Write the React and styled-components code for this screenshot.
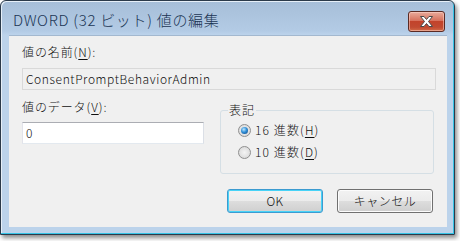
import React from "react";
import styled, { createGlobalStyle } from "styled-components";

const GlobalStyle = createGlobalStyle`
	html, body {
		margin: 0;
		padding: 0;
		background: #ffffff;
	}
	body {
		font-family: "Noto Sans CJK JP", "DejaVu Sans", sans-serif;
	}
`;

const Page = styled.div`
	width: 460px;
	height: 241px;
	overflow: hidden;
`;

const Window = styled.div`
	width: 455px;
	height: 235px;
	box-sizing: border-box;
	border: 1px solid #2b3a4a;
	border-radius: 6px 6px 0 0;
	background: linear-gradient(#a6bed8 0px, #b3cbe5 30px, #bcd3eb 34px, #bcd3eb 100%);
	box-shadow: inset -1px -1px 0 #35c4e6, inset 1px 1px 0 #e6eff8, 2px 3px 4px rgba(0, 0, 0, 0.45);
	display: flex;
	flex-direction: column;
	padding: 0 7px 7px 8px;
`;

const TitleBar = styled.div`
	height: 34px;
	display: flex;
	justify-content: space-between;
	align-items: flex-start;
`;

const Title = styled.div`
	padding: 9px 0 0 4px;
	font-size: 15px;
	line-height: 20px;
	font-weight: 300;
	color: #1b3554;
	letter-spacing: 0.7px;
`;

const CloseButton = styled.div`
	margin-top: 10px;
	margin-right: 2px;
	width: 37px;
	height: 21px;
	box-sizing: border-box;
	border: 1px solid #5b2a23;
	border-radius: 3px;
	background: linear-gradient(#e9ab9c 0%, #d7725d 45%, #c2432b 50%, #c14a31 80%, #d36c48 100%);
	box-shadow: inset 0 0 0 1px rgba(255, 220, 210, 0.5);
	display: flex;
	align-items: center;
	justify-content: center;
`;

const Client = styled.div`
	flex: 1;
	background: #f0f0f0;
	border-top: 1px solid #a3b8cf;
	padding: 8px 11px 0 13px;
	font-size: 12px;
	line-height: 16px;
	font-weight: 300;
	letter-spacing: 0.9px;
	color: #101010;
	display: flex;
	flex-direction: column;
`;

const Label = styled.div`
	margin-top: ${(p) => p.$top || 0}px;
`;

const Key = styled.span`
	text-decoration: underline;
	text-underline-offset: 2px;
`;

const ReadonlyField = styled.div`
	margin-top: 8px;
	height: 22px;
	box-sizing: border-box;
	border: 1px solid #d9d9d9;
	background: #f0f0f0;
	padding: 2px 3px;
	letter-spacing: 0.6px;
`;

const Row = styled.div`
	display: flex;
	gap: 16px;
	margin-top: 9px;
`;

const Column = styled.div`
	width: 182px;
	display: flex;
	flex-direction: column;
`;

const Input = styled.div`
	margin-top: 7px;
	height: 22px;
	box-sizing: border-box;
	border: 1px solid #abadb3;
	border-color: #abadb3 #dbdfe6 #e3e9ef #e2e3ea;
	background: #ffffff;
	padding: 2px 3px;
`;

const Group = styled.fieldset`
	margin: 4px 0 0 0;
	width: 214px;
	height: 71px;
	box-sizing: border-box;
	border: 1px solid #d5dfe5;
	border-radius: 3px;
	padding: 5px 0 0 17px;
	display: flex;
	flex-direction: column;
	gap: 6px;
`;

const Legend = styled.legend`
	padding: 0 1px;
	margin-left: -10px;
	line-height: 14px;
`;

const Radio = styled.div`
	display: flex;
	align-items: center;
	gap: 4px;
	height: 16px;
	letter-spacing: 1.1px;
`;

const Dot = styled.span`
	flex: none;
	width: 13px;
	height: 13px;
	box-sizing: border-box;
	border-radius: 50%;
	border: 1px solid #8f8f8f;
	background: radial-gradient(circle at 50% 50%, #f4f4f4 0, #dadada 80%);
	display: flex;
	align-items: center;
	justify-content: center;
	&::after {
		content: "";
		width: 7px;
		height: 7px;
		border-radius: 50%;
		display: ${(p) => (p.$on ? "block" : "none")};
		background: radial-gradient(circle at 40% 35%, #bfe8ff 0, #2f8fd8 45%, #0e3f7a 100%);
	}
`;

const Buttons = styled.div`
	display: flex;
	justify-content: flex-end;
	gap: 14px;
	margin-top: 15px;
	padding-right: 3px;
`;

const Button = styled.div`
	width: 96px;
	height: 24px;
	box-sizing: border-box;
	border: 1px solid ${(p) => (p.$primary ? "#3c9bd0" : "#707070")};
	border-radius: 3px;
	background: linear-gradient(#f2f2f2 0%, #ebebeb 50%, #dddddd 51%, #cfcfcf 100%);
	box-shadow: inset 0 0 0 1px ${(p) => (p.$primary ? "#48d3f7" : "#fcfcfc")};
	display: flex;
	align-items: center;
	justify-content: center;
	letter-spacing: 0.5px;
`;

function CloseIcon() {
	return (
		<svg width="17" height="13" viewBox="0 0 17 13">
			<path
				d="M2.5 1.5 H6 L8.5 4.5 L11 1.5 H14.5 L10.5 6.5 L14.5 11.5 H11 L8.5 8.5 L6 11.5 H2.5 L6.5 6.5 Z"
				fill="#ffffff"
				stroke="#4a4a4a"
				strokeWidth="1"
				strokeLinejoin="round"
			/>
		</svg>
	);
}

export default function App() {
	return (
		<Page>
			<GlobalStyle />
			<Window>
				<TitleBar>
					<Title>DWORD (32 ビット) 値の編集</Title>
					<CloseButton>
						<CloseIcon />
					</CloseButton>
				</TitleBar>
				<Client>
					<Label>
						値の名前(<Key>N</Key>):
					</Label>
					<ReadonlyField>ConsentPromptBehaviorAdmin</ReadonlyField>
					<Row>
						<Column>
							<Label>
								値のデータ(<Key>V</Key>):
							</Label>
							<Input>0</Input>
						</Column>
						<Group>
							<Legend>表記</Legend>
							<Radio>
								<Dot $on />
								<span>
									16 進数(<Key>H</Key>)
								</span>
							</Radio>
							<Radio>
								<Dot />
								<span>
									10 進数(<Key>D</Key>)
								</span>
							</Radio>
						</Group>
					</Row>
					<Buttons>
						<Button $primary>OK</Button>
						<Button>キャンセル</Button>
					</Buttons>
				</Client>
			</Window>
		</Page>
	);
}
